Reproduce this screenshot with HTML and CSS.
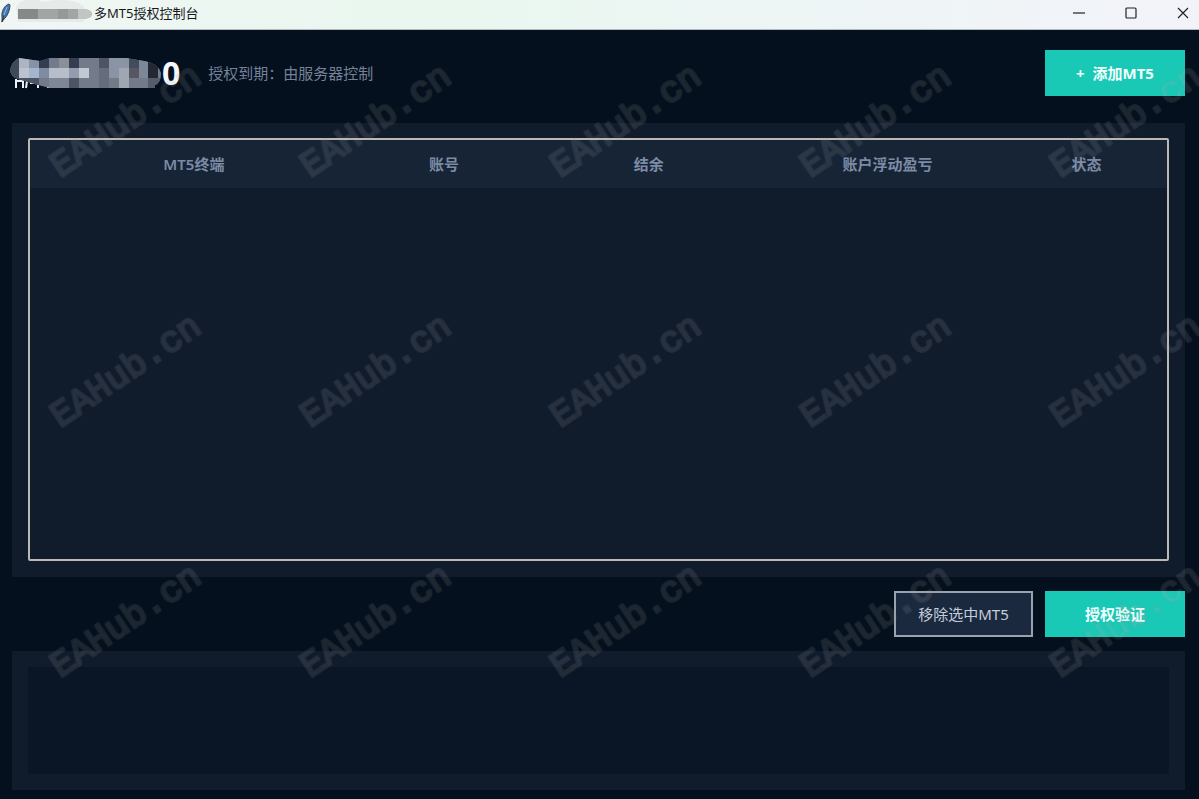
FILE: index.html
```html
<!DOCTYPE html>
<html lang="zh-CN">
<head>
<meta charset="utf-8">
<meta name="viewport" content="width=device-width, initial-scale=1">
<title>多MT5授权控制台</title>
<link rel="stylesheet" href="styles.css">
</head>
<body>
<div class="window">
  <header class="titlebar">
    <svg class="feather" viewBox="0 0 12 20" aria-hidden="true">
      <path d="M9 1C5 2 1 8 2 14l0 5 2-3C7 14 10 7 10 2z" fill="#3f78b8" stroke="#3a4650"/>
      <path d="M7 4C6 7 4 11 3 15" fill="none" stroke="#8fbbe6"/>
      <path d="M4 12l-2 7" fill="none" stroke="#26313d"/>
    </svg>
    <svg class="mask-small" viewBox="0 0 80 26" aria-hidden="true">
      <path d="M0 8C4-2 18-3 26 2c20-4 34-2 42 4v16H2z" fill="#e6ebe9"/>
      <path d="M2 9h66q8 1 8 5t-8 5H2z" fill="#a2a5a5"/>
      <path d="M2 9h10v10H2zM12 9h10v10H12z" fill="#868989"/>
      <path d="M42 9h10v10H42z" fill="#969999"/>
      <path d="M62 9h6q8 1 8 5t-8 5h-6z" fill="#c1c5c4"/>
    </svg>
    <span class="window-title">多MT5授权控制台</span>
    <div class="window-controls">
      <button class="control" type="button" aria-label="最小化"><svg viewBox="0 0 12 12"><path d="M0 6h12"/></svg></button>
      <button class="control" type="button" aria-label="最大化"><svg viewBox="0 0 12 12"><rect x="1" y="1" width="10" height="10" rx="1"/></svg></button>
      <button class="control" type="button" aria-label="关闭"><svg viewBox="0 0 12 12"><path d="M1 1l10 10M11 1L1 11"/></svg></button>
    </div>
  </header>

  <main class="content">
    <section class="heading">
      <svg class="mask-large" viewBox="0 0 152 32" aria-hidden="true">
        <defs><clipPath id="brush"><path d="M0 13Q2 4 9 1l21 3 10-3h76l18 3q14 2 17 12 0 10-6 12v3H40L28 28 8 22Q1 20 0 13z"/></clipPath></defs>
        <path d="M6 22v9M6 24h7v7M17 24l-1 7M20 26h8v5M38 27v4" fill="none" stroke="#eef3fa" stroke-width="2"/>
        <g clip-path="url(#brush)">
          <rect width="152" height="32" fill="#737b8b"/>
          <path d="M0 0h9v32H0z" fill="#40495a"/>
          <path d="M9 0h10v11H9z" fill="#adb4c2"/>
          <path d="M9 11h10v10H9z" fill="#bcc3cf"/>
          <path d="M19 0h10v11H19z" fill="#8792a6"/>
          <path d="M19 11h10v10H19z" fill="#a4b5d0"/>
          <path d="M29 0h10v11H29zM59 0h10v11H59z" fill="#353e50"/>
          <path d="M29 11h10v10H29z" fill="#7f8ba2"/>
          <path d="M39 11h20v10H39z" fill="#b6bdcb"/>
          <path d="M49 1h10v10H49z" fill="#8c8e98"/>
          <path d="M59 11h10v10H59z" fill="#929cae"/>
          <path d="M69 11h10v10H69z" fill="#c3c9d4"/>
          <path d="M9 21h20v11H9zM59 21h10v11H59z" fill="#4d5563"/>
          <path d="M39 21h20v11H39z" fill="#7d8798"/>
          <path d="M89 0h10v11H89z" fill="#4d5563"/>
          <path d="M89 11h10v21H89z" fill="#666d7a"/>
          <path d="M99 0h20v21H99z" fill="#8b94a5"/>
          <path d="M109 11h10v21h-10z" fill="#a0a7b3"/>
          <path d="M119 0h10v11h-10z" fill="#424c5d"/>
          <path d="M119 11h10v10h-10z" fill="#555862"/>
          <path d="M129 0h9v21h-9z" fill="#7c8799"/>
          <path d="M138 0h10v21h-10z" fill="#242835"/>
          <path d="M138 21h14v11h-14z" fill="#555d6b"/>
        </g>
      </svg>
      <h1 class="product">0</h1>
      <p class="expiry">授权到期：由服务器控制</p>
      <button class="button primary" type="button">+&nbsp; 添加MT5</button>
    </section>

    <section class="panel terminals">
      <div class="table-frame">
        <table class="table">
          <colgroup><col class="col-terminal"><col class="col-account"><col class="col-balance"><col class="col-profit"><col class="col-status"></colgroup>
          <thead><tr><th scope="col">MT5终端</th><th scope="col">账号</th><th scope="col">结余</th><th scope="col">账户浮动盈亏</th><th scope="col">状态</th></tr></thead>
          <tbody></tbody>
        </table>
      </div>
    </section>

    <section class="actions">
      <button class="button secondary" type="button">移除选中MT5</button>
      <button class="button primary" type="button">授权验证</button>
    </section>

    <section class="panel log-panel">
      <textarea class="log" aria-label="日志" readonly></textarea>
    </section>
  </main>

  <svg class="watermark" aria-hidden="true">
    <g><text transform="translate(60 178) rotate(-34)">EAHub.cn</text><text transform="translate(310 178) rotate(-34)">EAHub.cn</text><text transform="translate(560 178) rotate(-34)">EAHub.cn</text><text transform="translate(810 178) rotate(-34)">EAHub.cn</text><text transform="translate(1060 178) rotate(-34)">EAHub.cn</text></g>
    <g transform="translate(0 250)"><text transform="translate(60 178) rotate(-34)">EAHub.cn</text><text transform="translate(310 178) rotate(-34)">EAHub.cn</text><text transform="translate(560 178) rotate(-34)">EAHub.cn</text><text transform="translate(810 178) rotate(-34)">EAHub.cn</text><text transform="translate(1060 178) rotate(-34)">EAHub.cn</text></g>
    <g transform="translate(0 500)"><text transform="translate(60 178) rotate(-34)">EAHub.cn</text><text transform="translate(310 178) rotate(-34)">EAHub.cn</text><text transform="translate(560 178) rotate(-34)">EAHub.cn</text><text transform="translate(810 178) rotate(-34)">EAHub.cn</text><text transform="translate(1060 178) rotate(-34)">EAHub.cn</text></g>
  </svg>
</div>
</body>
</html>
```

FILE: styles.css
```css
* { box-sizing: border-box; }

body {
  margin: 0;
  background: #04101d;
  font-family: "Noto Sans", "Noto Sans CJK SC", sans-serif;
  font-size: 15px;
}

.window {
  position: relative;
  display: flex;
  flex-direction: column;
  min-height: 100vh;
  overflow: hidden;
}

.titlebar {
  display: flex;
  align-items: center;
  height: 30px;
  padding-bottom: 3px;
  background: linear-gradient(90deg, #f0f6f4 0%, #e9f7ee 35%, #edf5f5 65%, #f2f3f9 100%);
  border-bottom: 1px solid #b4bbc0;
  color: #15191c;
}

.feather { width: 12px; height: 20px; }
.mask-small { width: 80px; height: 26px; margin-left: 4px; }
.window-title { font-size: 13px; line-height: 24px; margin-left: -2px; }

.window-controls {
  display: flex;
  gap: 28px;
  margin-left: auto;
  padding-right: 4px;
}

.control {
  display: flex;
  justify-content: center;
  align-items: center;
  width: 24px;
  height: 24px;
  padding: 0;
  border: 0;
  background: none;
}

.control svg {
  width: 12px;
  height: 12px;
  fill: none;
  stroke: #202226;
  stroke-width: 1.2;
}

.content {
  flex: 1;
  display: flex;
  flex-direction: column;
  padding: 20px 14px 9px 12px;
}

.heading {
  display: flex;
  align-items: center;
  height: 46px;
}

.mask-large { width: 152px; height: 32px; margin-left: -2px; }

.product {
  margin: 0;
  color: #f4f7fb;
  font-size: 32px;
  line-height: 46px;
}

.expiry {
  margin: 0 0 0 28px;
  padding-bottom: 2px;
  color: #74829a;
}

.button {
  width: 140px;
  height: 46px;
  padding: 0 0 2px;
  border: 0;
  font-family: inherit;
  font-size: 15px;
}

.primary {
  background: #1ac8b6;
  color: #f2fffd;
  font-weight: 700;
}

.heading .button { margin-left: auto; }

.secondary {
  width: 139px;
  background: #1b293e;
  border: 2px solid #9aa2ad;
  color: #c3cddd;
}

.panel { background: #101b2c; }

.terminals {
  flex: 1;
  display: flex;
  margin-top: 27px;
  padding: 15px 16px 16px;
}

.table-frame {
  flex: 1;
  border: 2px solid #bbb9b2;
  border-radius: 2px;
}

.table {
  width: 100%;
  table-layout: fixed;
  border-collapse: collapse;
}

.table th {
  height: 48px;
  padding: 0 2px 2px 0;
  background: #162436;
  color: #7c8ba5;
  font-weight: 600;
  text-align: center;
}

.col-terminal { width: 29%; }
.col-account { width: 15%; }
.col-balance { width: 21%; }
.col-profit { width: 21%; }
.col-status { width: 14%; }

.actions {
  display: flex;
  justify-content: flex-end;
  gap: 12px;
  padding: 14px 0;
}

.log-panel {
  display: flex;
  height: 139px;
  padding: 16px;
}

.log {
  flex: 1;
  border: 0;
  padding: 8px;
  background: #0a1625;
  color: #8090ab;
  font: inherit;
  resize: none;
}

.watermark {
  position: absolute;
  inset: 0;
  width: 100%;
  height: 100%;
  opacity: 0.14;
  pointer-events: none;
}

.watermark text {
  font-family: "Liberation Mono", "Courier New", monospace;
  font-size: 36px;
  fill: #b4b4b4;
  stroke: #969696;
  stroke-width: 3px;
  stroke-linejoin: round;
  paint-order: stroke;
}
```
